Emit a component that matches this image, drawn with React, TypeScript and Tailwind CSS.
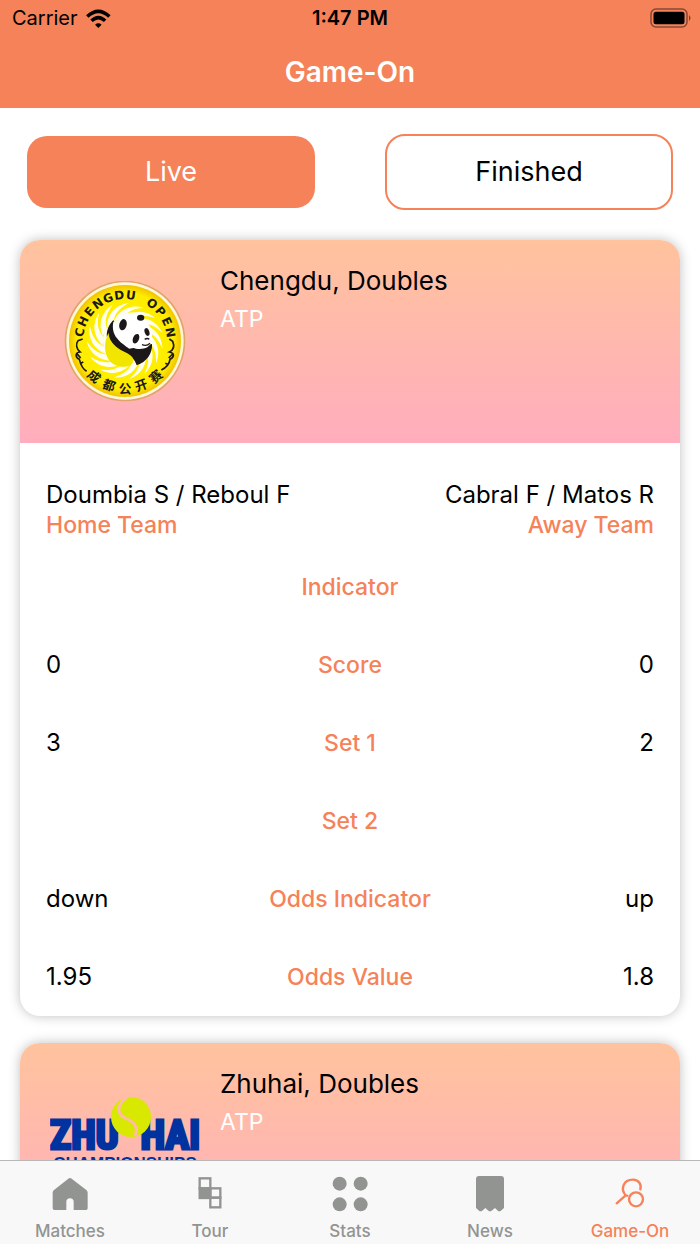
import { useState } from "react";
import type { ReactNode } from "react";

interface StatRow {
  label: string;
  home: string;
  away: string;
}

interface Match {
  id: string;
  title: string;
  tour: string;
  logo: ReactNode;
  home: string;
  away: string;
  rows: StatRow[];
}

const RAYS = Array.from({ length: 15 }, (_, i) => i * 24);

const CHENGDU_LATIN = [..."CHENGDU OPEN"].map((char, i) => ({ char, angle: (i - 5.5) * 14.4 }));

const CHENGDU_CHARS = [
  { char: "成", angle: 41 },
  { char: "都", angle: 20 },
  { char: "公", angle: 0 },
  { char: "开", angle: -20 },
  { char: "赛", angle: -41 },
];

function ChengduLogo() {
  return (
    <svg viewBox="42 33 366 366" className="h-[122px] w-[122px]" role="img" aria-label="Chengdu Open">
      <defs>
        <radialGradient id="chengdu-yellow" cx="225" cy="213" r="170" gradientUnits="userSpaceOnUse">
          <stop offset="0.4" stopColor="#fff000" />
          <stop offset="0.85" stopColor="#ffec00" />
          <stop offset="1" stopColor="#f0c000" />
        </radialGradient>
      </defs>
      <circle cx="225" cy="213" r="181" fill="#dfa468" />
      <circle cx="225" cy="213" r="176" fill="#fff6d8" />
      <circle cx="225" cy="213" r="168" fill="url(#chengdu-yellow)" />
      {RAYS.map((angle) => (
        <path
          key={angle}
          d="M170 172 C172 132 196 104 236 99 C208 114 192 132 190 160 Z"
          fill="#fffef0"
          transform={`rotate(${angle} 225 213)`}
        />
      ))}
      <circle cx="225" cy="213" r="66" fill="#fffef0" />
      {/* black body behind the head */}
      <path d="M190 150 C162 180 166 216 190 234 C214 250 250 250 260 286 C290 276 308 250 306 222 L240 234 L212 206 Z" fill="#1c1719" />
      <path d="M190 156 C182 196 208 216 238 236 L262 232 L214 150 Z" fill="#fff" />
      {/* ball */}
      <path d="M176 188 C160 216 160 262 190 282 C216 298 248 290 250 272 C252 252 214 246 196 228 C182 214 176 202 176 188 Z" fill="#f2e500" />
      {/* head */}
      <path d="M208 142 C228 124 258 122 276 140 C300 156 310 190 305 214 C300 234 278 240 258 236 C232 230 212 206 205 182 Z" fill="#fff" />
      <ellipse cx="219" cy="164" rx="11" ry="17" fill="#1c1719" transform="rotate(14 219 164)" />
      <ellipse cx="272" cy="143" rx="11" ry="9" fill="#1c1719" />
      <ellipse cx="258" cy="206" rx="9" ry="15" fill="#1c1719" transform="rotate(22 258 206)" />
      <ellipse cx="291" cy="186" rx="7" ry="12" fill="#1c1719" transform="rotate(-18 291 186)" />
      <path d="M284 208 q8 -5 14 0 M276 224 q14 6 24 -4" fill="none" stroke="#1c1719" strokeWidth="4" />
      {/* vines */}
      <path
        d="M98 207 L84 212 C76 222 80 238 90 246 C74 248 76 262 88 268 C92 284 96 296 110 304 M80 250 l12 14 M92 280 l8 -4"
        fill="none"
        stroke="#1c1719"
        strokeWidth="5"
      />
      <path
        d="M358 207 L368 214 C374 228 370 240 358 246 C376 250 372 262 360 268 C358 284 350 292 334 300 M368 252 l-12 12 M356 284 l-10 -4"
        fill="none"
        stroke="#1c1719"
        strokeWidth="5"
      />
      {CHENGDU_LATIN.map(({ char, angle }) => (
        <text
          key={angle}
          x="225"
          y="87"
          fill="#1c1719"
          fontFamily="DejaVu Sans, sans-serif"
          fontWeight="700"
          fontSize="36"
          textAnchor="middle"
          transform={`rotate(${angle} 225 213)`}
        >
          {char}
        </text>
      ))}
      {CHENGDU_CHARS.map(({ char, angle }) => (
        <text
          key={char}
          x="225"
          y="368"
          fill="#1c1719"
          fontFamily="Noto Sans CJK SC, sans-serif"
          fontWeight="700"
          fontSize="38"
          textAnchor="middle"
          transform={`rotate(${angle} 225 213)`}
        >
          {char}
        </text>
      ))}
    </svg>
  );
}

function ZhuhaiLogo() {
  return (
    <svg viewBox="0 0 150 150" className="h-[150px] w-[150px]" role="img" aria-label="Zhuhai Championships">
      <g
        fill="#0033a0"
        stroke="#0033a0"
        strokeWidth="3"
        fontFamily="Roboto Condensed, Roboto, sans-serif"
        fontWeight="700"
        fontSize="40"
      >
        <text x="0" y="79">ZHU</text>
        <text x="150" y="79" textAnchor="end">HAI</text>
      </g>
      <text
        x="75"
        y="99"
        fill="#0033a0"
        fontFamily="Liberation Sans, sans-serif"
        fontWeight="700"
        fontSize="17"
        textAnchor="middle"
      >
        CHAMPIONSHIPS
      </text>
      <circle cx="81" cy="47" r="20" fill="#d9e800" />
      <path d="M77 27 C66 35 66 44 77 49 C86 53 88 59 85 66" fill="none" stroke="#ffbcaa" strokeWidth="3" />
    </svg>
  );
}

const MATCHES: Match[] = [
  {
    id: "chengdu",
    title: "Chengdu, Doubles",
    tour: "ATP",
    logo: <ChengduLogo />,
    home: "Doumbia S / Reboul F",
    away: "Cabral F / Matos R",
    rows: [
      { label: "Indicator", home: "", away: "" },
      { label: "Score", home: "0", away: "0" },
      { label: "Set 1", home: "3", away: "2" },
      { label: "Set 2", home: "", away: "" },
      { label: "Odds Indicator", home: "down", away: "up" },
      { label: "Odds Value", home: "1.95", away: "1.8" },
    ],
  },
  {
    id: "zhuhai",
    title: "Zhuhai, Doubles",
    tour: "ATP",
    logo: <ZhuhaiLogo />,
    home: "",
    away: "",
    rows: [],
  },
];

const TABS = [
  {
    label: "Matches",
    icon: (
      <svg viewBox="157 438 108 108" className="size-9" fill="currentColor" aria-hidden="true">
        <path d="M205 447 Q211 441 217 447 L260 480 Q264 483 264 488 V535 Q264 540 259 540 H222 V516 Q222 505 211 505 Q200 505 200 516 V540 H164 Q159 540 159 535 V488 Q159 483 163 480 Z" />
      </svg>
    ),
  },
  {
    label: "Tour",
    icon: (
      <svg viewBox="575 438 108 108" className="size-9" fill="none" stroke="currentColor" strokeWidth="7" aria-hidden="true">
        <rect x="598" y="445" width="32" height="30" />
        <rect x="598" y="475" width="32" height="29" fill="currentColor" />
        <rect x="630" y="475" width="30" height="28" />
        <rect x="630" y="503" width="30" height="29" />
      </svg>
    ),
  },
  {
    label: "Stats",
    icon: (
      <svg viewBox="993 438 108 108" className="size-9" fill="currentColor" aria-hidden="true">
        <circle cx="1016" cy="461" r="21" />
        <circle cx="1079" cy="461" r="21" />
        <circle cx="1016" cy="523" r="21" />
        <circle cx="1079" cy="523" r="21" />
      </svg>
    ),
  },
  {
    label: "News",
    icon: (
      <svg viewBox="363 438 108 108" className="size-9" fill="currentColor" aria-hidden="true">
        <path d="M375 447 Q375 438 384 438 H450 Q459 438 459 447 V534 L448 544 L442 544 L432 534 L420 544 L414 544 L403 534 L392 544 L386 544 L375 534 Z" />
      </svg>
    ),
  },
  {
    label: "Game-On",
    icon: (
      <svg
        viewBox="785 438 108 108"
        className="size-9"
        fill="none"
        stroke="currentColor"
        strokeWidth="7"
        strokeLinecap="round"
        aria-hidden="true"
      >
        <path d="M799 520 L826 496 M831 497 L826 496 C810 478 818 449 848 449 C866 449 874 464 870 478" />
        <circle cx="857" cy="508" r="21" />
      </svg>
    ),
  },
];

function StatusBar() {
  return (
    <div className="grid h-9 grid-cols-3 items-center px-3 text-xl leading-6 text-black">
      <div className="flex items-center gap-2">
        <span>Carrier</span>
        <svg viewBox="253 20 77 58" className="h-[19px] w-[25px]" fill="none" stroke="currentColor" strokeWidth="11" aria-hidden="true">
          <path d="M257 43 Q291 11 325 43" />
          <path d="M270 56 Q291 36 312 56" />
          <path d="M281 68 Q291 59 301 68 L291 78 Z" fill="currentColor" stroke="none" />
        </svg>
      </div>
      <p className="text-center font-semibold">1:47 PM</p>
      <svg viewBox="0 0 42 20" className="-mr-1 h-5 w-[42px] justify-self-end" aria-hidden="true">
        <rect x="1" y="1" width="36" height="18" rx="5" fill="none" stroke="#000" strokeOpacity="0.45" strokeWidth="1.5" />
        <rect x="3.5" y="3.8" width="31" height="12.4" rx="2.5" />
        <path d="M39 7 Q42 10 39 13 Z" fillOpacity="0.5" />
      </svg>
    </div>
  );
}

function MatchCard({ match }: { match: Match }) {
  return (
    <article className="rounded-[20px] bg-white shadow-[0_0_12px_rgba(0,0,0,0.25)]">
      <div className="flex h-[203px] gap-5 rounded-t-[20px] bg-linear-to-b from-[#ffc39d] to-[#ffadbd] pl-[30px]">
        <div className="flex w-[150px] shrink-0 items-center justify-center">{match.logo}</div>
        <div className="pt-[25px]">
          <h2 className="text-[26px] leading-8 text-black">{match.title}</h2>
          <p className="mt-2 text-[23px] leading-7 text-white">{match.tour}</p>
        </div>
      </div>

      {match.rows.length > 0 && (
        <div className="px-[26px]">
          <div className="flex justify-between pt-[37px] pb-2">
            <div>
              <p className="text-2xl leading-[30px] text-black">{match.home}</p>
              <p className="text-[23px] leading-[30px] font-medium text-[#f58259]">Home Team</p>
            </div>
            <div className="text-right">
              <p className="text-2xl leading-[30px] text-black">{match.away}</p>
              <p className="text-[23px] leading-[30px] font-medium text-[#f58259]">Away Team</p>
            </div>
          </div>
          <table className="w-full table-fixed">
            <tbody>
              {match.rows.map((row) => (
                <tr key={row.label} className="h-[78px] text-2xl text-black">
                  <td>{row.home}</td>
                  <th scope="row" className="text-center text-[23px] font-medium text-[#f58259]">
                    {row.label}
                  </th>
                  <td className="text-right">{row.away}</td>
                </tr>
              ))}
            </tbody>
          </table>
        </div>
      )}
    </article>
  );
}

export default function App() {
  const [filter, setFilter] = useState("Live");
  const [tab, setTab] = useState("Game-On");

  return (
    <div className="flex h-screen flex-col bg-white font-[Inter,sans-serif]">
      <header className="bg-[#f58259]">
        <StatusBar />
        <h1 className="pt-[18px] pb-[18px] text-center text-[28px] leading-9 font-semibold text-white">Game-On</h1>
      </header>

      <main className="min-h-0 flex-1 overflow-y-auto [scrollbar-width:none]">
        <div className="grid grid-cols-2 items-center gap-[70px] px-[27px] pt-[26px]">
          {["Live", "Finished"].map((name) => (
            <button
              key={name}
              type="button"
              onClick={() => setFilter(name)}
              className={`rounded-[20px] text-[27px] leading-9 ${
                filter === name ? "h-[72px] bg-[#f58259] text-white" : "h-[76px] border-2 border-[#f58259] bg-white text-black"
              }`}
            >
              {name}
            </button>
          ))}
        </div>
        <div className="flex flex-col gap-[27px] px-5 pt-[30px] pb-7">
          {MATCHES.map((match) => (
            <MatchCard key={match.id} match={match} />
          ))}
        </div>
      </main>

      <nav className="grid h-[84px] shrink-0 grid-cols-5 border-t border-[#b8b8b8] bg-[#f8f8f8]">
        {TABS.map(({ label, icon }) => (
          <button
            key={label}
            type="button"
            onClick={() => setTab(label)}
            className={`flex flex-col items-center gap-[7px] pt-[15px] text-[17px] leading-6 font-medium ${
              tab === label ? "text-[#f58259]" : "text-[#929492]"
            }`}
          >
            {icon}
            <span>{label}</span>
          </button>
        ))}
      </nav>
    </div>
  );
}
